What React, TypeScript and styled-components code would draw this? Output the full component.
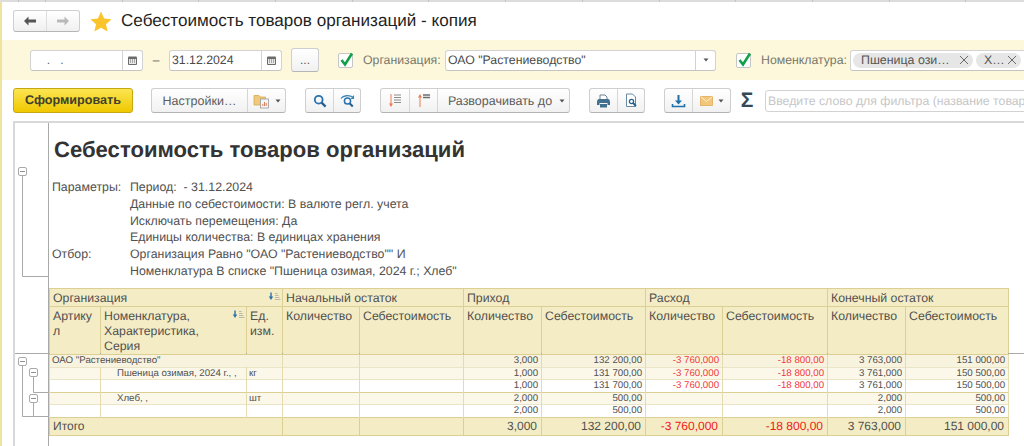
import React from 'react';
import styled, { createGlobalStyle } from 'styled-components';

const GlobalStyle = createGlobalStyle`
	html, body {
		margin: 0;
		padding: 0;
		background: #fff;
	}
	body {
		font-family: 'Liberation Sans', Arial, sans-serif;
		color: #4a4a4a;
		text-rendering: geometricPrecision;
	}
`;

const Page = styled.div`
	width: 1024px;
	height: 446px;
	overflow: hidden;
	display: flex;
	flex-direction: column;
`;

const TopStrip = styled.div`
	height: 2px;
	flex: none;
	background: repeating-linear-gradient(90deg, #c4c4c4 0, #c4c4c4 1px, #dcdcdc 1px, #dcdcdc 76.7px);
	background-position: 45px 0;
`;

const Body = styled.div`
	flex: 1;
	min-height: 0;
	display: flex;
`;

const LeftStripe = styled.div`
	width: 2px;
	flex: none;
	background: #efe39f;
`;

const Main = styled.div`
	flex: 1;
	min-width: 0;
	display: flex;
	flex-direction: column;
`;

const TitleBar = styled.div`
	height: 22px;
	margin-top: 8px;
	padding-left: 11px;
	display: flex;
	align-items: center;
`;

const NavGroup = styled.div`
	display: flex;
	width: 67px;
	height: 22px;
	box-sizing: border-box;
	border: 1px solid #cfcfcf;
	border-bottom-color: #b5b5b5;
	border-radius: 3px;
	background: linear-gradient(#ffffff, #f0f0f0);
`;

const NavButton = styled.div<{ $divider?: boolean }>`
	flex: 1;
	display: flex;
	align-items: center;
	justify-content: center;
	border-left: ${(p) => (p.$divider ? '1px solid #dedede' : 'none')};
`;

const StarBox = styled.div`
	margin-left: 10px;
	display: flex;
`;

const WindowTitle = styled.div`
	margin-left: 9px;
	font-size: 17.1px;
	color: #1f1f1f;
	white-space: nowrap;
`;

const FilterBand = styled.div`
	height: 40px;
	margin-top: 8px;
	flex: none;
	box-sizing: border-box;
	padding-left: 28px;
	background: #fdf8dc;
	display: flex;
	align-items: center;
	overflow: hidden;
`;

const Field = styled.div<{ $w: number }>`
	width: ${(p) => p.$w}px;
	height: 21px;
	flex: none;
	box-sizing: border-box;
	background: #fff;
	border: 1px solid #d2d2d2;
	border-bottom-color: #c4c4c4;
	border-radius: 3px;
	display: flex;
	align-items: center;
	font-size: 12.3px;
	color: #4a4a4a;
`;

const FieldText = styled.div<{ $muted?: boolean }>`
	flex: 1;
	padding-left: 2px;
	white-space: nowrap;
	overflow: hidden;
	color: ${(p) => (p.$muted ? '#666' : '#4a4a4a')};
`;

const FieldAddon = styled.div<{ $w: number }>`
	width: ${(p) => p.$w}px;
	height: 100%;
	flex: none;
	border-left: 1px solid #d2d2d2;
	display: flex;
	align-items: center;
	justify-content: center;
`;

const Dash = styled.div`
	width: 26px;
	flex: none;
	text-align: center;
	font-size: 12px;
	color: #555;
`;

const DotsButton = styled.div`
	width: 28px;
	height: 24px;
	margin-left: 9px;
	flex: none;
	box-sizing: border-box;
	border: 1px solid #cfcfcf;
	border-bottom-color: #b5b5b5;
	border-radius: 3px;
	background: linear-gradient(#ffffff, #f1f1f1);
	font-size: 12px;
	color: #555;
	text-align: center;
	line-height: 23px;
`;

const CheckBox = styled.div<{ $ml: number }>`
	width: 15px;
	height: 15px;
	margin-left: ${(p) => p.$ml}px;
	flex: none;
	box-sizing: border-box;
	border: 1px solid #c6c6c6;
	border-radius: 2px;
	background: #fff;
	position: relative;
	svg {
		position: absolute;
		left: 0;
		top: -3px;
	}
`;

const FieldLabel = styled.div<{ $w: number }>`
	width: ${(p) => p.$w}px;
	margin-left: 10px;
	flex: none;
	font-size: 12.3px;
	color: #77776a;
	white-space: nowrap;
`;

const ChipField = styled(Field)`
	padding-left: 2px;
	gap: 3px;
`;

const Chip = styled.div<{ $w: number }>`
	width: ${(p) => p.$w}px;
	height: 15px;
	flex: none;
	box-sizing: border-box;
	padding: 0 4px 0 8px;
	background: #e6e6e6;
	border-radius: 8px;
	display: flex;
	align-items: center;
	justify-content: space-between;
	font-size: 12.4px;
	color: #555;
	white-space: nowrap;
`;

const Toolbar = styled.div`
	height: 25px;
	margin-top: 8px;
	padding-left: 11px;
	flex: none;
	display: flex;
	align-items: center;
	gap: 19px;
`;

const PrimaryButton = styled.div`
	width: 120px;
	height: 25px;
	margin-right: -1px;
	flex: none;
	box-sizing: border-box;
	border: 1px solid #c6a70f;
	border-radius: 3px;
	background: linear-gradient(#fbe552, #f0c800);
	font-size: 12.6px;
	font-weight: bold;
	color: #40402c;
	text-align: center;
	line-height: 23px;
`;

const ToolGroup = styled.div`
	display: flex;
	height: 25px;
	flex: none;
	box-sizing: border-box;
	border: 1px solid #cfcfcf;
	border-bottom-color: #b3b3b3;
	border-radius: 3px;
	background: linear-gradient(#ffffff, #f1f1f1);
`;

const ToolButton = styled.div<{ $w: number; $first?: boolean; $menu?: boolean }>`
	width: ${(p) => p.$w}px;
	box-sizing: border-box;
	padding-left: ${(p) => (p.$menu ? '6px' : '0')};
	display: flex;
	align-items: center;
	justify-content: center;
	gap: ${(p) => (p.$menu ? '7px' : '5px')};
	font-size: 12.5px;
	color: #5c5c5c;
	white-space: nowrap;
	border-left: ${(p) => (p.$first ? 'none' : '1px solid #d6d6d6')};
`;

const Sigma = styled.div`
	width: 14px;
	margin: 1px -8px 0 -10px;
	flex: none;
	font-size: 21px;
	font-weight: bold;
	color: #33495a;
	text-align: center;
`;

const SearchInput = styled.input`
	width: 300px;
	height: 22px;
	flex: none;
	box-sizing: border-box;
	padding: 0 2px;
	border: 1px solid #d2d2d2;
	border-radius: 3px;
	background: #fff;
	font-family: inherit;
	font-size: 12.3px;
	text-rendering: geometricPrecision;
	outline: none;
	&::placeholder {
		color: #c6c6c6;
		opacity: 1;
	}
`;

const Report = styled.div`
	margin: 8px 0 0 11px;
	flex: 1;
	min-height: 0;
	display: flex;
	border-top: 2px solid #d8d8d8;
	border-left: 2px solid #d8d8d8;
	position: relative;
`;

const Gutter = styled.div`
	width: 33px;
	flex: none;
	border-right: 1px solid #a9a9a9;
	svg {
		display: block;
	}
`;

const Sheet = styled.div`
	flex: 1;
	min-width: 0;
`;

const ReportTitle = styled.div`
	margin: 14px 0 0 5px;
	height: 26px;
	font-size: 22.1px;
	line-height: 26px;
	font-weight: bold;
	color: #333;
	white-space: nowrap;
`;

const Params = styled.div`
	margin: 16px 0 0 3px;
	height: 95px;
	display: grid;
	grid-template-columns: 78px 1fr;
	grid-auto-rows: 16.8px;
	font-size: 12.35px;
	line-height: 16.8px;
	color: #505050;
	white-space: nowrap;
`;

const ReportTable = styled.table`
	width: 959px;
	margin-top: 14px;
	table-layout: fixed;
	border-collapse: collapse;
	font-size: 12.3px;
	color: #505050;
`;

const HeadCell = styled.th<{ $h: number }>`
	height: ${(p) => p.$h}px;
	padding: 2px 3px 0 3px;
	box-sizing: border-box;
	background: #f4ecc5;
	border: 1px solid #dccf94;
	font-weight: normal;
	text-align: left;
	vertical-align: top;
	line-height: 15px;
	word-break: break-all;
	position: relative;
	overflow: hidden;
	svg {
		position: absolute;
		right: 1px;
		top: 3px;
	}
`;

const DataRow = styled.tr<{ $tone: 'group' | 'item' | 'plain' }>`
	background: ${(p) => (p.$tone === 'group' ? '#f8f3de' : p.$tone === 'item' ? '#fbf8ea' : '#fff')};
	border-bottom: 1px solid ${(p) => (p.$tone === 'plain' ? '#dccf94' : '#ebe5c8')};
`;

const Cell = styled.td<{ $red?: boolean; $text?: boolean; $indent?: boolean }>`
	height: 12.5px;
	padding: 0 3px 0 ${(p) => (p.$indent ? '16px' : '2px')};
	box-sizing: border-box;
	border-left: 1px solid #e4dcae;
	border-right: 1px solid #e4dcae;
	font-size: 9.7px;
	line-height: 11px;
	text-align: ${(p) => (p.$text ? 'left' : 'right')};
	color: ${(p) => (p.$red ? '#f03a3a' : '#505050')};
	white-space: nowrap;
	overflow: hidden;
`;

const TotalRow = styled.tr`
	background: #f4ecc5;
	border-bottom: 1px solid #dccf94;
`;

const TotalCell = styled.td<{ $red?: boolean; $label?: boolean }>`
	height: 18px;
	padding: 0 4px 0 3px;
	box-sizing: border-box;
	border-left: 1px solid #dccf94;
	border-right: 1px solid #dccf94;
	font-size: 12px;
	line-height: 14px;
	text-align: ${(p) => (p.$label ? 'left' : 'right')};
	color: ${(p) => (p.$red ? '#f01818' : '#505050')};
	white-space: nowrap;
`;

const RowRule = styled.div`
	position: absolute;
	left: 0;
	right: 0;
	top: 230px;
	height: 1px;
	background: #a9a9a9;
`;

const Calendar = () => (
	<svg width='11' height='11' viewBox='0 0 11 11'>
		<rect x='1' y='1.5' width='9' height='8.5' rx='1' fill='#6b6b6b' />
		<rect x='2' y='4' width='7' height='5' fill='#e9e9e9' />
		<path d='M3 5h1M5 5h1M7 5h1M3 7h1M5 7h1M7 7h1' stroke='#666' strokeWidth='1' />
	</svg>
);

const Caret = () => (
	<svg width='6' height='4' viewBox='0 0 6 4'>
		<path d='M0.5 0.5h5L3 3.5z' fill='#555' />
	</svg>
);

const Tick = () => (
	<svg width='15' height='17' viewBox='0 0 15 17'>
		<path d='M2.5 9 L6 13.5 L13 2.5' fill='none' stroke='#11a04a' strokeWidth='2.6' />
	</svg>
);

const Cross = () => (
	<svg width='10' height='10' viewBox='0 0 10 10'>
		<path d='M1 1l8 8M9 1l-8 8' stroke='#6a6a6a' strokeWidth='1' />
	</svg>
);

const SearchIcon = () => (
	<svg width='14' height='14' viewBox='0 0 14 14'>
		<circle cx='5.7' cy='5.7' r='3.9' fill='none' stroke='#2a72ad' strokeWidth='1.8' />
		<path d='M8.6 8.6l4 4' stroke='#24608f' strokeWidth='2.2' />
	</svg>
);

const RepeatSearchIcon = () => (
	<svg width='15' height='14' viewBox='0 0 15 14'>
		<path d='M1 4.5C3 1.5 9 .5 13.5 3.5' fill='none' stroke='#3a86b8' strokeWidth='1.3' />
		<path d='M14 1v4h-3.5z' fill='#3a86b8' />
		<circle cx='7.5' cy='7' r='3.1' fill='none' stroke='#2a72ad' strokeWidth='1.5' />
		<path d='M9.8 9.5l3 3' stroke='#24608f' strokeWidth='2' />
	</svg>
);

const FolderIcon = () => (
	<svg width='17' height='16' viewBox='0 0 17 16'>
		<path d='M1 2.5h5l1 1.5h5.5v8H1z' fill='#f0c97c' stroke='#d9a84f' strokeWidth='.8' />
		<rect x='7.5' y='6' width='8' height='9' fill='#f5f5f5' stroke='#9a9a9a' strokeWidth='.8' />
		<path d='M9.8 13v-2M11.5 13v-4M13.2 13v-3' stroke='#d97f5a' strokeWidth='1' />
	</svg>
);

const ExpandDownIcon = () => (
	<svg width='14' height='15' viewBox='0 0 14 15'>
		<path d='M3 1v11' stroke='#ea7a50' strokeWidth='1' />
		<path d='M1 10.5h4L3 14z' fill='#ea7a50' />
		<path d='M6 2h7M6 4.5h7M6 7h7M6 9.5h7' stroke='#8d8d8d' strokeWidth='1.2' />
	</svg>
);

const ExpandUpIcon = () => (
	<svg width='14' height='15' viewBox='0 0 14 15'>
		<path d='M3 3v11' stroke='#ea7a50' strokeWidth='1' />
		<path d='M1 4.5h4L3 1z' fill='#ea7a50' />
		<path d='M6 2h7M6 4.5h7' stroke='#6d6d6d' strokeWidth='1.3' />
	</svg>
);

const PrintIcon = () => (
	<svg width='15' height='14' viewBox='0 0 15 14'>
		<path d='M4 1h5l2 2v3H4z' fill='#fff' stroke='#6b8296' strokeWidth='1' />
		<path d='M1 8c0-2 1-3 2-3h9c1 0 2 1 2 3v3h-2.5V9h-8v2H1z' fill='#44708f' />
		<rect x='4' y='10' width='7' height='3.5' fill='#44708f' />
	</svg>
);

const PreviewIcon = () => (
	<svg width='13' height='15' viewBox='0 0 13 15'>
		<path d='M1.5 1h6l3 3v9.5h-9z' fill='#fff' stroke='#6a8aa3' strokeWidth='1' />
		<circle cx='6.5' cy='8.5' r='2.1' fill='none' stroke='#24608f' strokeWidth='1.3' />
		<path d='M8 10l3 3' stroke='#24608f' strokeWidth='1.8' />
	</svg>
);

const DownloadIcon = () => (
	<svg width='15' height='14' viewBox='0 0 15 14'>
		<path d='M7.5 1v6' stroke='#1f6fa8' strokeWidth='2' />
		<path d='M4 6.5h7L7.5 10.5z' fill='#1f6fa8' />
		<path d='M1.5 10v2.5h12V10' fill='none' stroke='#1f6fa8' strokeWidth='1.6' />
	</svg>
);

const MailIcon = () => (
	<svg width='13' height='10' viewBox='0 0 13 10'>
		<rect x='.5' y='.5' width='12' height='9' fill='#f2c77c' stroke='#e2ab55' strokeWidth='.8' />
		<path d='M.5 .5l6 5 6-5' fill='none' stroke='#fff0cf' strokeWidth='1' />
	</svg>
);

const SortIcon = () => (
	<svg width='13' height='10' viewBox='0 0 13 10'>
		<path d='M3 0.5v5' stroke='#2a72ad' strokeWidth='1.4' />
		<path d='M0.8 4.5h4.4L3 8z' fill='#2a72ad' />
		<path d='M7 1.5h2.5M7 3.5h3.5M7 5.5h4.5M7 7.5h5.5' stroke='#b9b9a8' strokeWidth='1' />
	</svg>
);

const OutlineMark = ({ x, y }: { x: number; y: number }) => (
	<g>
		<rect x={x + 0.5} y={y + 0.5} width='8' height='8' rx='1.5' fill='#fff' stroke='#a9a9a9' />
		<path d={`M${x + 2} ${y + 4.5}h5`} stroke='#8f8f8f' />
	</g>
);

const OutlineTree = () => (
	<svg width='33' height='322' viewBox='0 0 33 322'>
		<path
			d='M7.5 52V153.5H33M7.5 242V293.5H33M18.5 254V269.5H33M18.5 280V293.5'
			fill='none'
			stroke='#a9a9a9'
		/>
		<OutlineMark x={3} y={44} />
		<OutlineMark x={3} y={234} />
		<OutlineMark x={14} y={245} />
		<OutlineMark x={14} y={271} />
	</svg>
);

const columns = [51, 146, 36, 77, 104, 78, 104, 77, 105, 78, 103];

const groups = ['Начальный остаток', 'Приход', 'Расход', 'Конечный остаток'];

const rows = [
	{ tone: 'group', name: 'ОАО "Растениеводство"', unit: '', vals: ['3,000', '132 200,00', '-3 760,000', '-18 800,00', '3 763,000', '151 000,00'] },
	{ tone: 'item', name: 'Пшеница озимая, 2024 г., ,', unit: 'кг', vals: ['1,000', '131 700,00', '-3 760,000', '-18 800,00', '3 761,000', '150 500,00'] },
	{ tone: 'plain', name: '', unit: '', vals: ['1,000', '131 700,00', '-3 760,000', '-18 800,00', '3 761,000', '150 500,00'] },
	{ tone: 'item', name: 'Хлеб, ,', unit: 'шт', vals: ['2,000', '500,00', '', '', '2,000', '500,00'] },
	{ tone: 'plain', name: '', unit: '', vals: ['2,000', '500,00', '', '', '2,000', '500,00'] },
] as const;

const totals = ['3,000', '132 200,00', '-3 760,000', '-18 800,00', '3 763,000', '151 000,00'];

export default function App() {
	return (
		<>
			<GlobalStyle />
			<Page>
				<TopStrip />
				<Body>
					<LeftStripe />
					<Main>
						<TitleBar>
							<NavGroup>
								<NavButton>
									<svg width='14' height='10' viewBox='0 0 14 10'>
										<path d='M5.5 0.5L1 5l4.5 4.5V6.5H13v-3H5.5z' fill='#555' />
									</svg>
								</NavButton>
								<NavButton $divider>
									<svg width='14' height='10' viewBox='0 0 14 10'>
										<path d='M8.5 0.5L13 5 8.5 9.5V6.5H1v-3h7.5z' fill='#b9b9b9' />
									</svg>
								</NavButton>
							</NavGroup>
							<StarBox>
								<svg width='22' height='21' viewBox='0 0 22 21'>
									<path
										d='M11 0.5l3.1 6.9 7.4.8-5.5 5 1.6 7.3L11 16.8l-6.6 3.7L6 13.2.5 8.2l7.4-.8z'
										fill='#fbc42c'
									/>
								</svg>
							</StarBox>
							<WindowTitle>Себестоимость товаров организаций - копия</WindowTitle>
						</TitleBar>

						<FilterBand>
							<Field $w={113}>
								<FieldText $muted>&nbsp;&nbsp;&nbsp;&nbsp;.&nbsp;&nbsp;&nbsp;.</FieldText>
								<FieldAddon $w={19}>
									<Calendar />
								</FieldAddon>
							</Field>
							<Dash>–</Dash>
							<Field $w={113}>
								<FieldText>31.12.2024</FieldText>
								<FieldAddon $w={19}>
									<Calendar />
								</FieldAddon>
							</Field>
							<DotsButton>...</DotsButton>
							<CheckBox $ml={19}>
								<Tick />
							</CheckBox>
							<FieldLabel $w={82}>Организация:</FieldLabel>
							<Field $w={271}>
								<FieldText>ОАО "Растениеводство"</FieldText>
								<FieldAddon $w={19}>
									<Caret />
								</FieldAddon>
							</Field>
							<CheckBox $ml={20}>
								<Tick />
							</CheckBox>
							<FieldLabel $w={89}>Номенклатура:</FieldLabel>
							<ChipField $w={200}>
								<Chip $w={120}>
									Пшеница ози…
									<Cross />
								</Chip>
								<Chip $w={45}>
									Х…
									<Cross />
								</Chip>
							</ChipField>
						</FilterBand>

						<Toolbar>
							<PrimaryButton>Сформировать</PrimaryButton>
							<ToolGroup>
								<ToolButton $first $w={95}>
									Настройки…
								</ToolButton>
								<ToolButton $w={38}>
									<FolderIcon />
									<Caret />
								</ToolButton>
							</ToolGroup>
							<ToolGroup>
								<ToolButton $first $w={27}>
									<SearchIcon />
								</ToolButton>
								<ToolButton $w={27}>
									<RepeatSearchIcon />
								</ToolButton>
							</ToolGroup>
							<ToolGroup>
								<ToolButton $first $w={28}>
									<ExpandDownIcon />
								</ToolButton>
								<ToolButton $w={28}>
									<ExpandUpIcon />
								</ToolButton>
								<ToolButton $menu $w={132}>
									Разворачивать до
									<Caret />
								</ToolButton>
							</ToolGroup>
							<ToolGroup>
								<ToolButton $first $w={27}>
									<PrintIcon />
								</ToolButton>
								<ToolButton $w={27}>
									<PreviewIcon />
								</ToolButton>
							</ToolGroup>
							<ToolGroup>
								<ToolButton $first $w={27}>
									<DownloadIcon />
								</ToolButton>
								<ToolButton $w={38}>
									<MailIcon />
									<Caret />
								</ToolButton>
							</ToolGroup>
							<Sigma>Σ</Sigma>
							<SearchInput placeholder='Введите слово для фильтра (название товара' readOnly />
						</Toolbar>

						<Report>
							<RowRule />
							<Gutter>
								<OutlineTree />
							</Gutter>
							<Sheet>
								<ReportTitle>Себестоимость товаров организаций</ReportTitle>
								<Params>
									<div>Параметры:</div>
									<div>Период: &nbsp;- 31.12.2024</div>
									<div />
									<div>Данные по себестоимости: В валюте регл. учета</div>
									<div />
									<div>Исключать перемещения: Да</div>
									<div />
									<div>Единицы количества: В единицах хранения</div>
									<div>Отбор:</div>
									<div>Организация Равно "ОАО "Растениеводство"" И</div>
									<div />
									<div>Номенклатура В списке "Пшеница озимая, 2024 г.; Хлеб"</div>
								</Params>
								<ReportTable>
									<colgroup>
										{columns.map((w, i) => (
											<col key={i} width={w} />
										))}
									</colgroup>
									<thead>
										<tr>
											<HeadCell $h={18} colSpan={3}>
												Организация
												<SortIcon />
											</HeadCell>
											{groups.map((g) => (
												<HeadCell $h={18} colSpan={2} key={g}>
													{g}
												</HeadCell>
											))}
										</tr>
										<tr>
											<HeadCell $h={47}>Артикул</HeadCell>
											<HeadCell $h={47}>
												Номенклатура,
												<br />
												Характеристика,
												<br />
												Серия
												<SortIcon />
											</HeadCell>
											<HeadCell $h={47}>
												Ед.
												<br />
												изм.
											</HeadCell>
											{groups.map((g) => (
												<React.Fragment key={g}>
													<HeadCell $h={47}>Количество</HeadCell>
													<HeadCell $h={47}>Себестоимость</HeadCell>
												</React.Fragment>
											))}
										</tr>
									</thead>
									<tbody>
										{rows.map((r, i) => (
											<DataRow $tone={r.tone} key={i}>
												{r.tone === 'group' ? (
													<Cell $text colSpan={3}>
														{r.name}
													</Cell>
												) : (
													<>
														<Cell $text />
														<Cell $text $indent>
															{r.name}
														</Cell>
														<Cell $text>{r.unit}</Cell>
													</>
												)}
												<Cell />
												<Cell />
												{r.vals.map((v, j) => (
													<Cell $red={v.startsWith('-')} key={j}>
														{v}
													</Cell>
												))}
											</DataRow>
										))}
										<TotalRow>
											<TotalCell $label colSpan={3}>
												Итого
											</TotalCell>
											<TotalCell />
											<TotalCell />
											{totals.map((v, j) => (
												<TotalCell $red={v.startsWith('-')} key={j}>
													{v}
												</TotalCell>
											))}
										</TotalRow>
									</tbody>
								</ReportTable>
							</Sheet>
						</Report>
					</Main>
				</Body>
			</Page>
		</>
	);
}
